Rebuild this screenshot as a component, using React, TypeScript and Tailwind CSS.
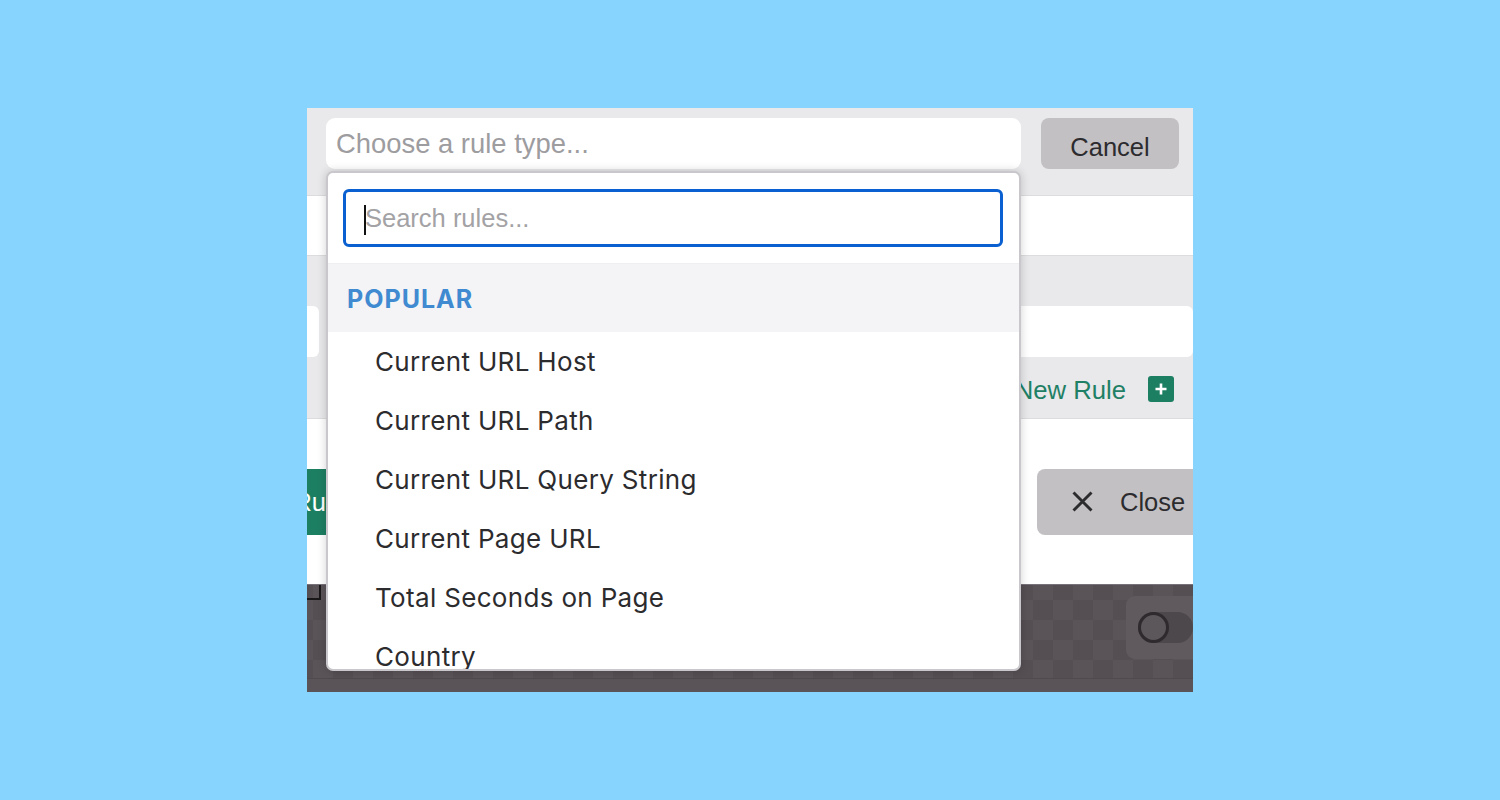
import React from "react";

const rules = [
  "Current URL Host",
  "Current URL Path",
  "Current URL Query String",
  "Current Page URL",
  "Total Seconds on Page",
  "Country",
];

export default function App() {
  return (
    <div className="w-[1500px] h-[800px] bg-[#87d4ff] flex items-center justify-center font-['Liberation_Sans',sans-serif]">
      <div className="relative w-[886px] h-[584px] overflow-hidden flex flex-col bg-white">
        {/* header */}
        <div className="h-[88px] shrink-0 bg-[#e9e8ea] border-b border-b-[#dcdbdd] flex items-start gap-5 pl-[19px] pr-[14px] pt-[10px]">
          <div className="w-[695px] h-[51px] bg-white rounded-[9px] pl-[10px] flex items-center text-[27.4px] text-[#9d9c9f]">
            Choose a rule type...
          </div>
          <button className="w-[138px] h-[51px] bg-[#c2c0c3] rounded-[8px] text-[25.5px] text-[#2c2b2e] pt-[7px] flex items-center justify-center">
            Cancel
          </button>
        </div>

        {/* white row */}
        <div className="h-[60px] shrink-0 bg-white border-b border-b-[#dcdbdd]" />

        {/* gray group */}
        <div className="h-[163px] shrink-0 bg-[#e9e8ea] border-b border-b-[#dcdbdd] flex flex-col pt-[50px]">
          <div className="h-[51px] shrink-0 flex justify-between">
            <div className="w-[12px] bg-white rounded-r-[6px]" />
            <div className="w-[300px] bg-white rounded-r-[6px]" />
          </div>
          <div className="h-[61px] flex items-center justify-end pr-[19px] gap-[22px]">
            <span className="text-[25.7px] text-[#1f8066] pt-[6px]">New Rule</span>
            <span className="w-[26px] h-[26px] mt-[2px] bg-[#1d7f62] rounded-[3px] flex items-center justify-center">
              <svg width="14" height="14" viewBox="0 0 14 14" fill="none" stroke="#fff" strokeWidth="2.6">
                <path d="M7 1.5v11M1.5 7h11" />
              </svg>
            </span>
          </div>
        </div>

        {/* footer */}
        <div className="h-[165px] shrink-0 bg-white flex items-center justify-between">
          <div className="w-[19px] h-[66px] bg-[#1d7f62] overflow-hidden flex items-center justify-end text-[25.5px] text-white whitespace-nowrap pt-[2px]">
            <span>Ru</span>
          </div>
          <div className="w-[156px] h-[66px] bg-[#c2c0c3] rounded-l-[8px] flex items-center pl-[34px] gap-[26px] text-[25.5px] text-[#2c2b2e]">
            <svg width="23" height="23" viewBox="0 0 23 23" fill="none" stroke="#2c2b2e" strokeWidth="2.9" className="shrink-0">
              <path d="M2.5 2.5l18 18M20.5 2.5l-18 18" />
            </svg>
            <span className="pt-[2px]">Close</span>
          </div>
        </div>

        {/* dark strip */}
        <div className="h-[108px] shrink-0 bg-[#5a5458] bg-[conic-gradient(#554f53_25%,#5a5458_0_50%,#554f53_0_75%,#5a5458_0)] bg-[length:40px_40px] bg-position-[26px_15px] border-t border-t-[#77727a] flex flex-col">
          <div className="h-[93px] flex justify-between items-start">
            <div className="w-[14px] h-[15px] border-r-2 border-b-2 border-[#1a1819]" />
            <div className="mt-[11px] w-[67px] h-[63px] bg-[#605a5e] rounded-l-[9px] flex items-center pl-[12px]">
              <div className="w-[56px] h-[31px] bg-[#4d484b] rounded-full relative">
                <div className="absolute left-0 top-0 w-[31px] h-[31px] rounded-full border-[3px] border-[#2e2a2d] bg-[#5c575a]" />
              </div>
            </div>
          </div>
          <div className="flex-1 bg-[#5a5458] border-t border-t-[#4f4a4d]" />
        </div>

        {/* dropdown */}
        <div className="absolute left-[19px] top-[63px] w-[695px] h-[500px] bg-white border-2 border-[#c9c7cb] rounded-[7px] overflow-hidden flex flex-col shadow-[0_0_10px_rgba(0,0,0,0.18)]">
          <div className="h-[91px] shrink-0 flex items-start pl-[15px] pt-[16px] border-b border-b-[#efeef0]">
            <div className="w-[660px] h-[58px] border-[3.5px] border-[#0a60d0] rounded-[6px] flex items-center pl-[19px] relative text-[25.5px] text-[#a3a2a5]">
              <span className="absolute left-[18px] top-[13px] w-[2px] h-[30px] bg-[#111]" />
              Search rules...
            </div>
          </div>
          <div className="h-[68px] shrink-0 bg-[#f4f3f6] flex items-center pl-[19px] pt-[3px] font-['Inter',sans-serif] font-bold text-[25px] tracking-[1px] text-[#3f8ad0]">
            POPULAR
          </div>
          <ul className="flex flex-col pl-[47px] font-['Inter',sans-serif] text-[26px] tracking-[0.33px] text-[#2c2b2e]">
            {rules.map((r) => (
              <li key={r} className="h-[59px] shrink-0 flex items-center">
                {r}
              </li>
            ))}
          </ul>
        </div>
      </div>
    </div>
  );
}
